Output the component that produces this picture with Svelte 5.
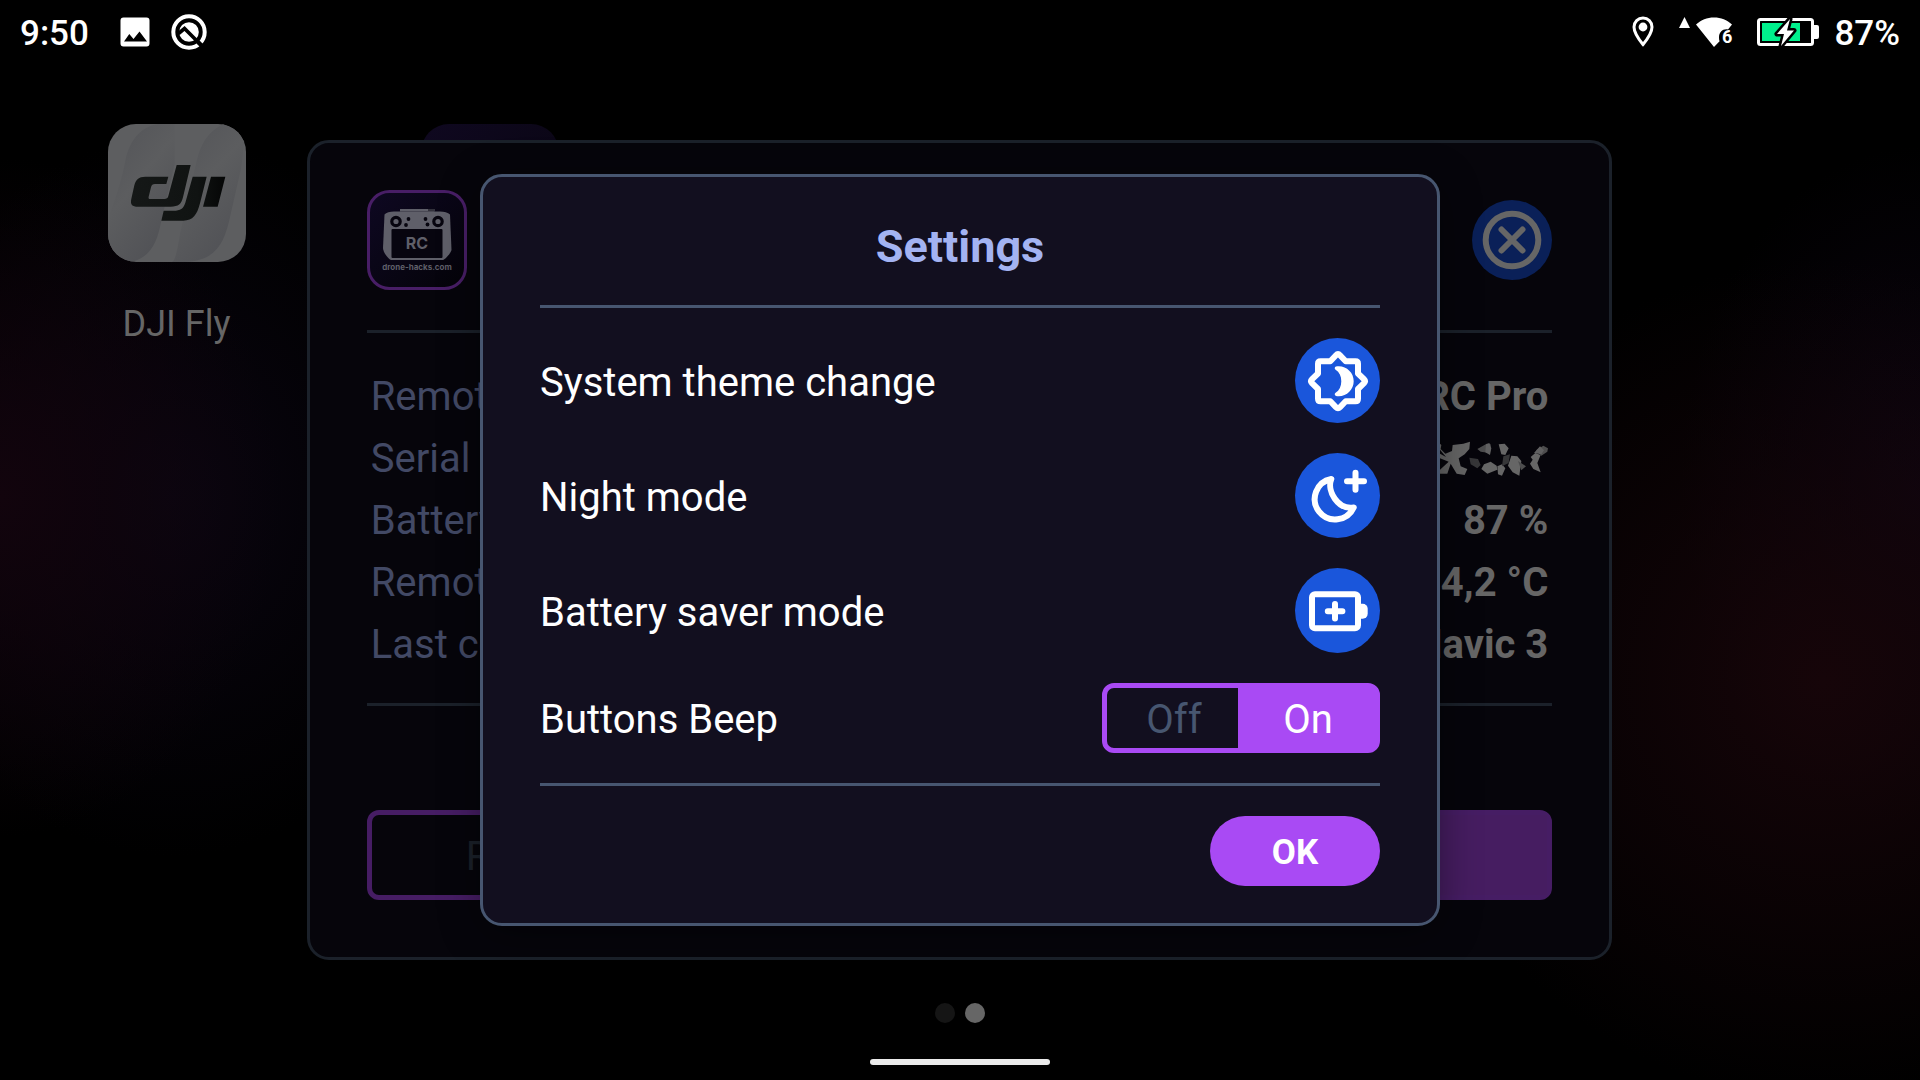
<script>
  let beep = $state('on');

  const details = [
    { label: 'Remote model', value: 'DJI RC Pro' },
    { label: 'Serial number', masked: true },
    { label: 'Battery level', value: '87 %' },
    { label: 'Remote temp', value: '34,2 °C' },
    { label: 'Last connected', value: 'Mavic 3' }
  ];

  const modes = [
    { id: 'theme', label: 'System theme change' },
    { id: 'night', label: 'Night mode' },
    { id: 'battery', label: 'Battery saver mode' }
  ];
</script>

<div class="screen">
  <header class="status">
    <div class="side">
      <time class="clock">9:50</time>
      <svg class="picture" viewBox="0 0 38 38" aria-hidden="true">
        <path fill="#fff" fill-rule="evenodd" d="M7.500 4.500h23a3 3 0 0 1 3 3v23a3 3 0 0 1-3 3h-23a3 3 0 0 1-3-3v-23a3 3 0 0 1 3-3zM8 28.500h23l-7.500-10-6 7.600-4.200-5z" />
      </svg>
      <svg class="ring" viewBox="0 0 36 36" aria-hidden="true">
        <circle cx="18" cy="18" r="15.700" fill="none" stroke="#fff" stroke-width="4" />
        <circle cx="18" cy="18" r="9.800" fill="#fff" />
        <path d="M7.500 19.500l6-5L29 30" fill="none" stroke="#000" stroke-width="3.600" />
        <path d="M25.500 29.500l3-3 5 5-3 3z" fill="#000" />
      </svg>
    </div>
    <div class="side">
      <svg class="pin" viewBox="0 0 22 32" aria-hidden="true">
        <path d="M11 2C6 2 2 6 2 11c0 6.500 9 17.500 9 17.500S20 17.500 20 11c0-5-4-9-9-9z" fill="none" stroke="#fff" stroke-width="3" />
        <circle cx="11" cy="11" r="4.400" fill="#fff" />
      </svg>
      <svg class="wifi" viewBox="0 0 54 30" aria-hidden="true">
        <path d="M0 11L5.500 0 11 11z" fill="#fff" />
        <path d="M17 7.500C22 3 28 .5 35 .5s13 2.500 18 7L49 12.500c-5-1-9 2.500-9 8 0 1.500.3 3 .6 3.800L35 30z" fill="#fff" />
        <text x="43" y="25.500" class="gen">6</text>
      </svg>
      <svg class="cell" viewBox="0 0 62 30" aria-hidden="true">
        <rect x="1.500" y="2.500" width="54" height="25" rx="2" fill="none" stroke="#fff" stroke-width="3" />
        <path d="M57 8h3a2 2 0 0 1 2 2v10a2 2 0 0 1-2 2h-3z" fill="#fff" />
        <rect x="5" y="6" width="38" height="18" fill="#00f08c" />
        <path d="M33 2L20 17h7l-3 12 13-15.500h-7z" fill="#fff" stroke="#000" stroke-width="5" stroke-linejoin="round" paint-order="stroke" />
      </svg>
      <span class="clock">87%</span>
    </div>
  </header>

  <main class="launcher">
    <a class="app" href="#dji-fly">
      <svg class="tile" viewBox="0 0 414 414" aria-hidden="true">
        <defs>
          <linearGradient id="leaf" x1="0" y1="0" x2="0.6" y2="1">
            <stop offset="0" stop-color="#525357" />
            <stop offset="0.5" stop-color="#5c5d5f" />
            <stop offset="1" stop-color="#515256" />
          </linearGradient>
          <linearGradient id="ink" x1="0" y1="0" x2="1" y2="0">
            <stop offset="0" stop-color="#151817" />
            <stop offset="0.7" stop-color="#101312" />
            <stop offset="1" stop-color="#050606" />
          </linearGradient>
          <clipPath id="tileClip"><rect width="414" height="414" rx="84" /></clipPath>
        </defs>
        <g clip-path="url(#tileClip)">
          <rect width="414" height="414" fill="#5d5e60" />
          <path d="M150 0C90 10 62 60 52 110C44 160 20 230 0 290V414H70C130 400 148 350 158 300L200 120V0z" fill="url(#leaf)" />
          <path d="M414 0H345C290 30 276 70 264 120L216 330C206 390 200 414 190 414H230C330 410 350 350 366 280L400 130z" fill="url(#leaf)" />
        </g>
        <path fill="url(#ink)" d="M181 158H112C92 158 83 167 79 184L70 224C66 241 72 248 90 248H188C212 248 220 240 225 220L248 123H206L181 216C179 223 176 225 169 225H127C122 225 121 222 122 218L129 190C131 183 134 180 141 180H175zM254 158H296L276 238C267 273 255 290 226 290H160L167 260H196C218 260 226 254 232 236zM309 158H352L329 248H285z" />
      </svg>
      <span>DJI Fly</span>
    </a>
    <a class="app" href="#hacks" aria-label="Drone Hacks"><span class="tile violet"></span></a>
  </main>

  <footer class="nav">
    <div class="dots"><i></i><i class="current"></i></div>
    <div class="pill"></div>
  </footer>

  <div class="layer">
    <section class="card">
      <div class="head">
        <svg class="logo" viewBox="0 0 100 100" role="img" aria-label="Drone Hacks">
          <defs>
            <linearGradient id="deep" x1="0" y1="0" x2="1" y2="1">
              <stop offset="0" stop-color="#0e0822" />
              <stop offset="1" stop-color="#040308" />
            </linearGradient>
          </defs>
          <rect x="1.500" y="1.500" width="97" height="97" rx="21" fill="url(#deep)" stroke="#481e66" stroke-width="3" />
          <path d="M33 19h34.500v2.500H33z" fill="#5f5f69" />
          <path d="M61 20h6" stroke="#07050f" stroke-width="1" />
          <path d="M17.500 24.500C19 22.500 23 21.500 27 21.500H73C77 21.500 81 22.500 83 24.500L84.500 60C84 63 78 69.500 76 70H24C21 69 16 62 16 58z" fill="#5f5f69" />
          <rect x="24.500" y="39" width="51" height="29" rx="1" fill="#07050f" />
          <circle cx="29" cy="31.500" r="4.200" fill="#5f5f69" stroke="#07050f" stroke-width="3.200" />
          <circle cx="71" cy="31.500" r="4.200" fill="#5f5f69" stroke="#07050f" stroke-width="3.200" />
          <g fill="#07050f">
            <circle cx="41.500" cy="29" r="1.900" /><circle cx="39" cy="35" r="1.900" />
            <circle cx="58.500" cy="29" r="1.900" /><circle cx="60.500" cy="34.500" r="1.900" />
          </g>
          <text x="50" y="58.500" class="rc">RC</text>
          <text x="50" y="79.500" class="site">drone-hacks.com</text>
        </svg>
        <button class="close" type="button" aria-label="Close">
          <svg viewBox="0 0 80 80" aria-hidden="true">
            <circle cx="40" cy="40" r="26.300" />
            <path d="M29.500 29.500l21 21M50.500 29.500l-21 21" />
          </svg>
        </button>
      </div>
      <dl class="details">
        {#each details as row}
          <div>
            <dt>{row.label}</dt>
            <dd>
              {#if row.masked}
                <svg class="mask" viewBox="0 0 324 108" role="img" aria-label="Hidden">
                  <g fill="#666">
                    <path d="M0 8L4 12 2 24 16 38 36 30 38 12 70 8 90 2 88 24 74 40 56 52 62 76 82 84 74 102 50 98 32 68 22 98 0 98V86L26 62 0 52V38L18 48 0 26z" />
                    <path d="M132 70L152 62 170 74 172 86 142 98 124 84zM176 10L194 8 206 22 196 42 184 40zM172 76L186 70 196 82 186 104 174 100zM214 44L232 46 244 60 238 104 218 94 204 74zM286 36L302 42 292 66 302 94 280 84 270 68 278 56 272 48z" />
                  </g>
                  <path d="M112 24L140 8 152 10 150 36 122 32zM234 60L258 76 244 88zM288 28L310 14 324 22 322 32 304 44z" fill="#4d4d4e" />
                  <path d="M138 10L148 6 154 22 150 42 136 34zM282 36L300 16 312 28 304 40z" fill="#606061" />
                  <path d="M88 50L114 54 122 72 112 82 92 70zM190 46L210 40 206 66 186 76z" fill="#363638" />
                </svg>
              {:else}{row.value}{/if}
            </dd>
          </div>
        {/each}
      </dl>
      <div class="choices">
        <button type="button">Remote control</button>
        <button type="button" class="chosen" aria-label="Aircraft"></button>
      </div>
    </section>
  </div>

  <div class="layer">
    <div class="modal" role="dialog" aria-modal="true" aria-labelledby="title">
      <h1 id="title">Settings</h1>
      <div class="rows">
        {#each modes as mode}
          <div class="row">
            <span class="name" id={mode.id}>{mode.label}</span>
            <button class="round" type="button" aria-labelledby={mode.id}>
              <svg viewBox="0 0 85 85" aria-hidden="true">
                {#if mode.id === 'theme'}
                  <path d="M41 17.200Q43 15 45 17.200L50.700 23.200H60.500Q63 23.200 63 25.700V35.500L69 41.200Q71.200 43.200 69 45.200L63 51V60.700Q63 63.200 60.500 63.200H50.700L45 69.200Q43 71.400 41 69.200L35.300 63.200H25.500Q23 63.200 23 60.700V51L17 45.200Q14.800 43.200 17 41.200L23 35.500V25.700Q23 23.200 25.500 23.200H35.300z" />
                  <path class="solid" d="M43.700 28.300C52 28.300 58.700 35 58.700 43.200S52 58.200 43.700 58.200C42.800 58.200 41.800 58.100 41 57.900C39.500 57.400 39.300 55.600 40.600 54.800C44.400 52.400 46.300 48.200 46.300 43.200S44.400 34.200 40.600 31.800C39.300 31 39.500 29 41 28.600C41.800 28.400 42.800 28.300 43.700 28.300z" />
                {:else if mode.id === 'night'}
                  <path d="M36.300 26A20.400 20.400 0 1 0 58.700 54.500C43 57 31.500 38 36.300 26z" />
                  <path d="M60.500 19.800v17M52 28.300h17" />
                {:else}
                  <rect x="17" y="26.300" width="46" height="34" rx="3" />
                  <path class="solid" d="M65 35.700h2.700a5 5 0 0 1 5 5v5a5 5 0 0 1-5 5H65z" />
                  <path d="M40 36v14.600M32.800 43.300h14.600" />
                {/if}
              </svg>
            </button>
          </div>
        {/each}
        <div class="row">
          <span class="name" id="beep">Buttons Beep</span>
          <div class="toggle" role="radiogroup" aria-labelledby="beep">
            <label><input type="radio" name="beep" value="off" bind:group={beep} /><span>Off</span></label>
            <label><input type="radio" name="beep" value="on" bind:group={beep} /><span>On</span></label>
          </div>
        </div>
      </div>
      <button class="ok" type="button">OK</button>
    </div>
  </div>
</div>

<style>
  :global(body) {
    margin: 0;
    background: #000;
  }

  .screen,
  .screen * {
    box-sizing: border-box;
  }

  .screen {
    position: relative;
    display: flex;
    flex-direction: column;
    min-height: 100vh;
    overflow: hidden;
    font-family: Roboto, 'Liberation Sans', sans-serif;
    font-size: 40px;
    line-height: 62px;
    background:
      radial-gradient(ellipse 280px 340px at 0 46%, #12040d, transparent),
      radial-gradient(ellipse 300px 360px at 9% 46%, #090510, transparent),
      radial-gradient(ellipse 420px 420px at 95% 63%, #160509, transparent),
      radial-gradient(ellipse 240px 340px at 100% 45%, #0b0410, transparent),
      #000;
  }

  button {
    margin: 0;
    padding: 0;
    border: 0;
    font: inherit;
    cursor: pointer;
  }

  svg {
    display: block;
  }

  .status {
    display: flex;
    justify-content: space-between;
    height: 63px;
    padding: 0 20px;
    color: #fff;
  }

  .side {
    display: flex;
    align-items: center;
  }

  .clock {
    font-size: 35px;
    font-weight: 500;
    line-height: 40px;
    padding-top: 4px;
  }

  .picture {
    width: 38px;
    height: 38px;
    margin: 0 17px 0 27px;
  }

  .ring {
    width: 36px;
    height: 36px;
  }

  .pin {
    width: 22px;
    height: 32px;
  }

  .wifi {
    width: 54px;
    height: 30px;
    margin: 0 24px 0 25px;
  }

  .gen {
    font-size: 18px;
    font-weight: 700;
    fill: #fff;
  }

  .cell {
    width: 62px;
    height: 30px;
    margin-right: 15px;
  }

  .launcher {
    flex: 1;
    display: grid;
    grid-template-columns: repeat(6, 1fr);
    align-content: start;
    padding: 61px 22px 0 20px;
  }

  .app {
    display: flex;
    flex-direction: column;
    align-items: center;
    gap: 31px;
    color: #666;
    font-size: 36px;
    text-decoration: none;
  }

  .tile {
    width: 138px;
    height: 138px;
  }

  .violet {
    border-radius: 28px;
    background: linear-gradient(135deg, #0f0820, #08050f);
  }

  .nav {
    display: flex;
    flex-direction: column;
    align-items: center;
    gap: 36px;
    padding-bottom: 15px;
  }

  .dots {
    display: flex;
    gap: 10px;
  }

  .dots i {
    width: 20px;
    height: 20px;
    border-radius: 50%;
    background: #151515;
  }

  .dots .current {
    background: #666;
  }

  .pill {
    width: 180px;
    height: 6px;
    border-radius: 3px;
    background: #ebebeb;
  }

  .layer {
    position: absolute;
    inset: 63px 0 43px;
    display: flex;
    align-items: center;
    justify-content: center;
  }

  .card {
    width: 68%;
    margin-right: 1px;
    padding: 47px 57px 57px;
    border: 3px solid #1b212a;
    border-radius: 22px;
    background: #06050b;
  }

  .head {
    display: flex;
    align-items: center;
    justify-content: space-between;
    padding-bottom: 40px;
    border-bottom: 3px solid #1b212a;
  }

  .logo {
    width: 100px;
    height: 100px;
  }

  .rc,
  .site {
    font-family: Inter, sans-serif;
    font-weight: 700;
    text-anchor: middle;
    fill: #5f5f69;
  }

  .rc {
    font-size: 16px;
  }

  .site {
    font-size: 8px;
  }

  .close {
    width: 80px;
    height: 80px;
    border-radius: 50%;
    background: #0a2058;
  }

  .close svg {
    fill: none;
    stroke: #666;
    stroke-width: 6;
    stroke-linecap: round;
  }

  .details {
    margin: 0;
    padding: 33px 4px 27px;
    border-bottom: 3px solid #1b212a;
  }

  .details div {
    display: flex;
    align-items: center;
    justify-content: space-between;
    height: 62px;
  }

  dt {
    color: #424965;
  }

  dd {
    margin: 0;
    color: #666;
    font-weight: 700;
  }

  .mask {
    width: 108px;
    height: 36px;
  }

  .choices {
    display: grid;
    grid-template-columns: 1fr 1fr;
    height: 90px;
    margin-top: 104px;
    border: 5px solid #461d64;
    border-radius: 12px;
  }

  .choices button {
    padding: 4px 94px 0;
    color: #1b212a;
    background: none;
    text-align: left;
  }

  .choices .chosen {
    background: #461d61;
  }

  .modal {
    display: flex;
    flex-direction: column;
    width: 50%;
    padding: 39px 57px 37px;
    border: 3px solid #475670;
    border-radius: 22px;
    background: #120f1f;
    box-shadow: 0 8px 40px #00000066;
    color: #fff;
  }

  h1 {
    margin: 0 0 27px;
    color: #a3b3f2;
    font-size: 45px;
    font-weight: 700;
    line-height: 62px;
    text-align: center;
  }

  .rows {
    display: flex;
    flex-direction: column;
    gap: 30px;
    padding: 30px 0;
    border: solid #475670;
    border-width: 3px 0;
  }

  .row {
    display: flex;
    align-items: center;
    justify-content: space-between;
  }

  .name {
    padding-top: 4px;
  }

  .round {
    width: 85px;
    height: 85px;
    border-radius: 50%;
    background: #1a56db;
  }

  .round svg {
    fill: none;
    stroke: #fff;
    stroke-width: 6;
    stroke-linecap: round;
    stroke-linejoin: round;
  }

  .round .solid {
    fill: #fff;
    stroke: none;
  }

  .toggle {
    display: grid;
    grid-template-columns: 131px 137px;
    height: 70px;
    border: 5px solid #a94af4;
    border-radius: 12px;
  }

  .toggle label {
    display: grid;
    cursor: pointer;
  }

  .toggle input {
    appearance: none;
    grid-area: 1 / 1;
    margin: 0;
    border-radius: 6px 0 0 6px;
  }

  .toggle input:checked {
    border-radius: 0;
    background: #a94af4;
  }

  .toggle span {
    grid-area: 1 / 1;
    padding: 3px 0 0 3px;
    line-height: 57px;
    text-align: center;
    color: #475670;
  }

  .toggle input:checked + span {
    color: #fff;
  }

  .ok {
    align-self: flex-end;
    width: 170px;
    height: 70px;
    margin-top: 30px;
    padding-top: 3px;
    border-radius: 35px;
    background: #a94af4;
    color: #fff;
    font-size: 35px;
    font-weight: 700;
    line-height: 67px;
  }
</style>
